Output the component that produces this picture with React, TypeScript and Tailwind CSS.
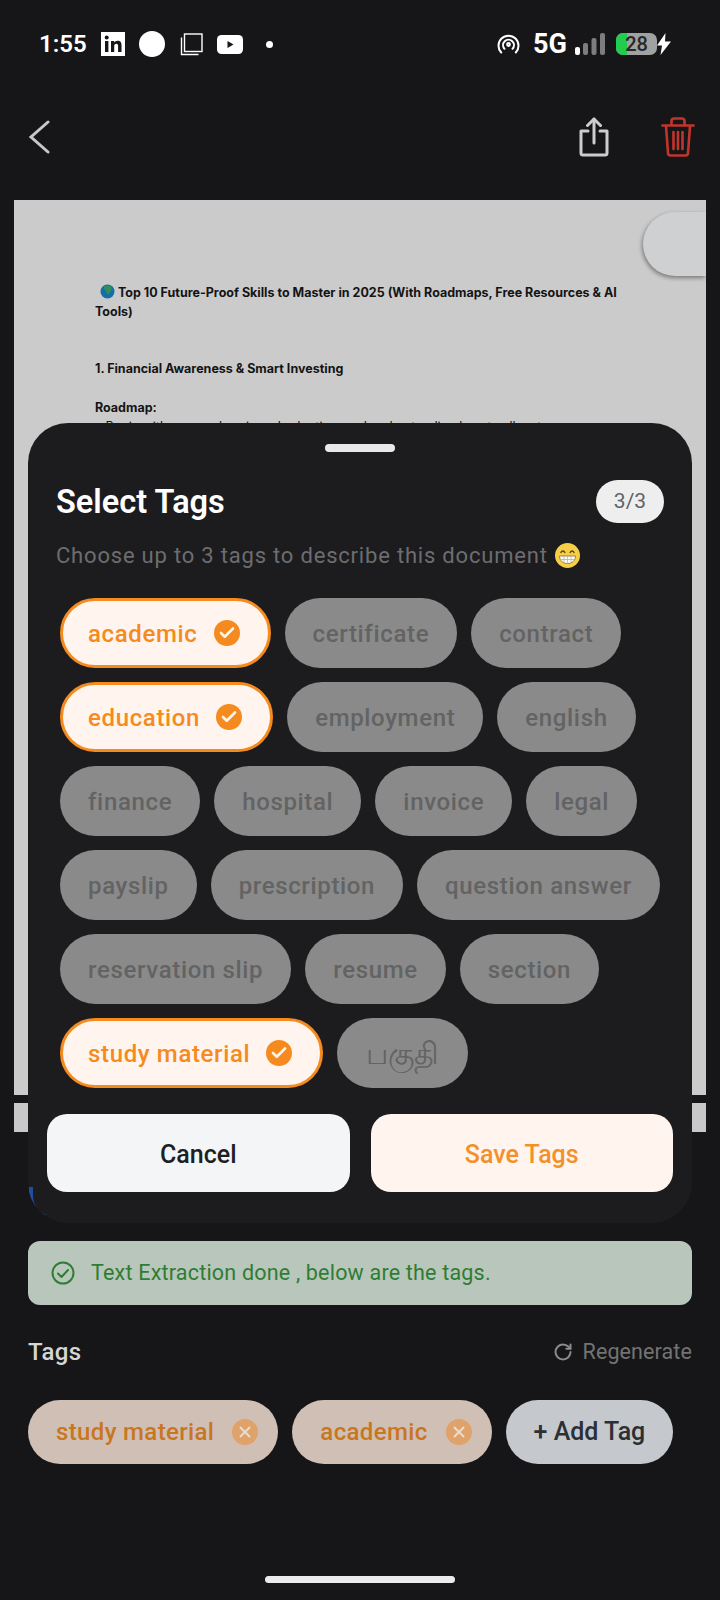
import { Check, X, RotateCw } from "lucide-react";

const rows: { label: string; on?: boolean }[][] = [
  [{ label: "academic", on: true }, { label: "certificate" }, { label: "contract" }],
  [{ label: "education", on: true }, { label: "employment" }, { label: "english" }],
  [{ label: "finance" }, { label: "hospital" }, { label: "invoice" }, { label: "legal" }],
  [{ label: "payslip" }, { label: "prescription" }, { label: "question answer" }],
  [{ label: "reservation slip" }, { label: "resume" }, { label: "section" }],
  [{ label: "study material", on: true }, { label: "பகுதி" }],
];

function Chip({ label, on }: { label: string; on?: boolean }) {
  if (on) {
    return (
      <div className="flex h-[70px] items-center gap-[16px] rounded-[35px] border-[3px] border-[#f58a1f] bg-[#fff5ee] pl-[25px] pr-[28px] text-[24px] font-medium tracking-[0.65px] text-[#f58a1f]">
        <span className="pt-[2px]">{label}</span>
        <span className="flex h-[26px] w-[26px] items-center justify-center rounded-full bg-[#f58a1f]">
          <Check size={18} strokeWidth={3.5} color="#fff5ee" />
        </span>
      </div>
    );
  }
  if (label === "பகுதி") {
    return <div className="flex h-[70px] items-center rounded-[35px] bg-[#8a8a8a] px-[29px] text-[30px] font-medium text-[#636363]">{label}</div>;
  }
  return (
    <div className="flex h-[70px] items-center rounded-[35px] bg-[#8a8a8a] px-[28px] pt-[2px] text-[24px] font-medium tracking-[0.65px] text-[#636363]">
      {label}
    </div>
  );
}

function StatusBar() {
  return (
    <div className="flex h-[88px] items-center pl-[39px] pr-[49px] text-white">
      <span className="w-[62px] text-[24px] font-semibold leading-none">1:55</span>
      <svg width="24" height="24" viewBox="0 0 24 24">
        <rect width="24" height="24" fill="#fff" />
        <rect x="4" y="9" width="3.4" height="11" fill="#161618" />
        <circle cx="5.7" cy="5.6" r="2" fill="#161618" />
        <path d="M10 9h3.2v1.6c.6-1 1.8-1.9 3.5-1.9 3 0 3.8 2 3.8 4.8V20h-3.4v-5.7c0-1.4-.4-2.6-1.8-2.6s-2.1 1.1-2.1 2.6V20H10z" fill="#161618" />
      </svg>
      <span className="ml-[14px] h-[26px] w-[26px] rounded-full bg-white" />
      <svg width="23" height="23" viewBox="0 0 23 23" fill="none" stroke="#fff" strokeWidth="1.4" className="ml-[15px]">
        <rect x="4.5" y="1" width="17.5" height="17.5" />
        <path d="M1.5 4.5V21.5H18.5" />
      </svg>
      <svg width="26" height="19" viewBox="0 0 26 19" className="ml-[14px]">
        <rect width="26" height="19" rx="4.5" fill="#fff" />
        <path d="M10.5 6l6 3.5-6 3.5z" fill="#161618" />
      </svg>
      <span className="ml-[23px] h-[7px] w-[7px] rounded-full bg-white" />
      <div className="flex-1" />
      <svg width="23" height="22" viewBox="0 0 23 22" fill="none" stroke="#fff" strokeWidth="2" strokeLinecap="round">
        <path d="M4.2 19.5a10 10 0 1 1 14.6 0" />
        <path d="M7.5 15.8a5.4 5.4 0 1 1 8 0" />
        <circle cx="11.5" cy="11.5" r="1.4" />
      </svg>
      <span className="ml-[13px] w-[33px] text-[27px] font-bold leading-none">5G</span>
      <svg width="30" height="22" viewBox="0 0 30 22" className="ml-[9px]">
        <rect x="0" y="14" width="5" height="8" rx="2" fill="#fff" />
        <rect x="8" y="10" width="5" height="12" rx="2" fill="#7d7d7d" />
        <rect x="16.5" y="5" width="5" height="17" rx="2" fill="#7d7d7d" />
        <rect x="25" y="0" width="5" height="22" rx="2" fill="#7d7d7d" />
      </svg>
      <div className="relative ml-[11px] flex h-[22px] w-[41px] items-center justify-center overflow-hidden rounded-[7px] bg-[#a1a1a1] text-[20px] font-medium text-[#26282a]">
        <span className="absolute left-0 top-0 h-full w-[11px] bg-[#22cc4e]" />
        <span className="relative">28</span>
      </div>
      <svg width="14" height="22" viewBox="0 0 14 22" fill="#fff">
        <path d="M8.5 0 0 12.5h5L3.5 22 14 8.5H8z" />
      </svg>
    </div>
  );
}

function AppBar() {
  return (
    <div className="flex h-[112px] items-center pb-[15px] pl-[28px] pr-[25px]">
      <svg width="22" height="34" viewBox="0 0 22 34" fill="none" stroke="#c8c8c8" strokeWidth="3" strokeLinecap="round">
        <path d="M20 2 3 17l17 15" />
      </svg>
      <div className="flex-1" />
      <svg width="30" height="40" viewBox="0 0 30 40" fill="none" stroke="#cdcdcd" strokeWidth="3" strokeLinecap="round" strokeLinejoin="round">
        <path d="M15 26V2" />
        <path d="M8.5 8.5 15 2l6.5 6.5" />
        <path d="M9 14H2v22a2 2 0 0 0 2 2h22a2 2 0 0 0 2-2V14h-7" />
      </svg>
      <svg width="34" height="40" viewBox="0 0 34 40" fill="none" stroke="#c2352c" strokeWidth="2.6" strokeLinecap="round" strokeLinejoin="round" className="ml-[52px]">
        <path d="M1.5 8.5h31" />
        <path d="M10.5 8V4a2.5 2.5 0 0 1 2.5-2.5h8A2.5 2.5 0 0 1 23.5 4v4" />
        <path d="M5 9l2 27a2.5 2.5 0 0 0 2.5 2.5h15A2.5 2.5 0 0 0 27 36l2-27" />
        <path d="M12.5 15v17M17 15v17M21.5 15v17" />
      </svg>
    </div>
  );
}

function Document() {
  return (
    <div className="mx-[14px]">
      <div className="relative h-[895px] overflow-hidden bg-[#cbcbcb] pl-[81px] pr-[72px] pt-[83px] text-[12.5px] font-bold leading-[19px] text-[#141414] [font-family:'Inter',sans-serif]">
        <div className="absolute right-0 top-[12px] h-[64px] w-[63px] rounded-l-[32px] bg-[#ced0d2] shadow-[-1px_2px_4px_rgba(0,0,0,0.4)]" />
        <p>
          <svg width="15" height="15" viewBox="0 0 15 15" className="ml-[5px] inline-block align-[-2px]">
            <circle cx="7.5" cy="7.5" r="7" fill="#146ea8" />
            <path d="M4 2.5c2-1.5 5-1.5 7 0 1 1.5 1 3.5-.5 5-1 1-1 2.5-2.5 3-1.5-.5-1-3-2.5-4C4 5.5 3 4 4 2.5z" fill="#2f8f5b" />
          </svg>
          {" "}Top 10 Future-Proof Skills to Master in 2025 (With Roadmaps, Free Resources &amp; AI Tools)
        </p>
        <p className="mt-[38px]">1. Financial Awareness &amp; Smart Investing</p>
        <p className="mt-[20px]">Roadmap:</p>
        <p className="font-normal">• Begin with personal savings, budgeting, and understanding how to allocate</p>
      </div>
      <div className="mt-[8px] h-[29px] bg-[#c8c8c8]" />
    </div>
  );
}

function Sheet() {
  return (
    <div className="absolute left-[28px] top-[423px] h-[800px] w-[664px] overflow-hidden rounded-[40px] bg-[#1c1c1e] px-[19px] pt-[21px]">
      <div className="absolute bottom-[8px] left-[1px] h-[28px] w-[20px] rounded-bl-[20px] border-l-[4px] border-[#1f4e9c]" />
      <div className="mx-auto h-[8px] w-[70px] rounded-full bg-[#e8e8e8]" />
      <div className="ml-[9px] mt-[28px] flex h-[43px] items-center justify-between pr-[9px]">
        <h2 className="pt-[2px] text-[32.5px] font-semibold leading-none text-white">Select Tags</h2>
        <span className="flex h-[43px] w-[68px] items-center justify-center rounded-[22px] bg-[#eeeeee] text-[21px] text-[#5f6368]">3/3</span>
      </div>
      <div className="ml-[9px] mt-[16px] flex h-[32px] items-center text-[22px] tracking-[0.8px] text-[#6d6d70]">
        Choose up to 3 tags to describe this document
        <svg width="25" height="25" viewBox="0 0 25 25" className="ml-[7px]">
          <circle cx="12.5" cy="12.5" r="12.5" fill="#f7ce46" />
          <path d="M4.5 13h16c0 4.5-3.5 7.5-8 7.5s-8-3-8-7.5z" fill="#fff" stroke="#8a6a1c" strokeWidth="0.8" />
          <path d="M4.5 16.5h16M9 13v7M12.5 13v7.5M16 13v7" stroke="#b9b4a4" strokeWidth="0.8" />
          <path d="M6 9.5c.8-2 3-2 3.8 0M15.2 9.5c.8-2 3-2 3.8 0" fill="none" stroke="#5d4a16" strokeWidth="1.5" strokeLinecap="round" />
        </svg>
      </div>
      <div className="ml-[13px] mt-[27px] flex flex-col gap-[14px]">
        {rows.map((row, i) => (
          <div key={i} className="flex gap-[14px]">
            {row.map((c) => (
              <Chip key={c.label} label={c.label} on={c.on} />
            ))}
          </div>
        ))}
      </div>
      <div className="mt-[26px] flex gap-[21px]">
        <div className="flex h-[78px] flex-1 items-center justify-center rounded-[20px] bg-[#f3f5f7] pt-[3px] text-[25px] font-medium text-[#1d1f22]">Cancel</div>
        <div className="flex h-[78px] flex-1 items-center justify-center rounded-[20px] bg-[#fff4ee] pt-[3px] text-[25px] font-medium text-[#f2912c]">Save Tags</div>
      </div>
    </div>
  );
}

function TagPill({ label }: { label: string }) {
  return (
    <div className="flex h-[64px] items-center gap-[18px] rounded-[32px] bg-[#d0bfb5] pl-[28px] pr-[20px] text-[24px] font-medium tracking-[0.36px] text-[#c8761f]">
      <span>{label}</span>
      <span className="flex h-[26px] w-[26px] items-center justify-center rounded-full bg-[#dfa26a]">
        <X size={18} strokeWidth={2.5} color="#eadccf" />
      </span>
    </div>
  );
}

export default function App() {
  return (
    <div className="relative h-[1600px] w-[720px] overflow-hidden bg-[#161618] [font-family:'Roboto',sans-serif]">
      <StatusBar />
      <AppBar />
      <Document />

      <div className="mx-[28px] mt-[109px] flex h-[64px] items-center gap-[16px] rounded-[12px] bg-[#b9c6bb] pl-[23px] text-[21.5px] tracking-[0.2px] text-[#2e7d32]">
        <svg width="24" height="24" viewBox="0 0 24 24" fill="none" stroke="#2e7d32" strokeWidth="2" strokeLinecap="round" strokeLinejoin="round">
          <circle cx="12" cy="12" r="10.5" />
          <path d="m7 12.5 3.5 3.5L17 9" />
        </svg>
        <span>Text Extraction done , below are the tags.</span>
      </div>

      <div className="mx-[28px] mt-[30px] flex h-[34px] items-center justify-between">
        <span className="text-[24px] font-medium tracking-[0.4px] text-[#d6d6d6]">Tags</span>
        <div className="flex items-center gap-[10px] text-[21.5px] tracking-[0.1px] text-[#737373]">
          <RotateCw size={20} strokeWidth={2.4} color="#8a8a8a" />
          <span>Regenerate</span>
        </div>
      </div>

      <div className="ml-[28px] mt-[31px] flex gap-[14px]">
        <TagPill label="study material" />
        <TagPill label="academic" />
        <div className="flex h-[64px] items-center rounded-[32px] bg-[#c5c8cc] px-[28px] text-[25px] font-medium text-[#2c2f33]">+ Add Tag</div>
      </div>

      <div className="absolute bottom-[17px] left-[265px] h-[7px] w-[190px] rounded-full bg-[#ebebeb]" />
      <Sheet />
    </div>
  );
}
